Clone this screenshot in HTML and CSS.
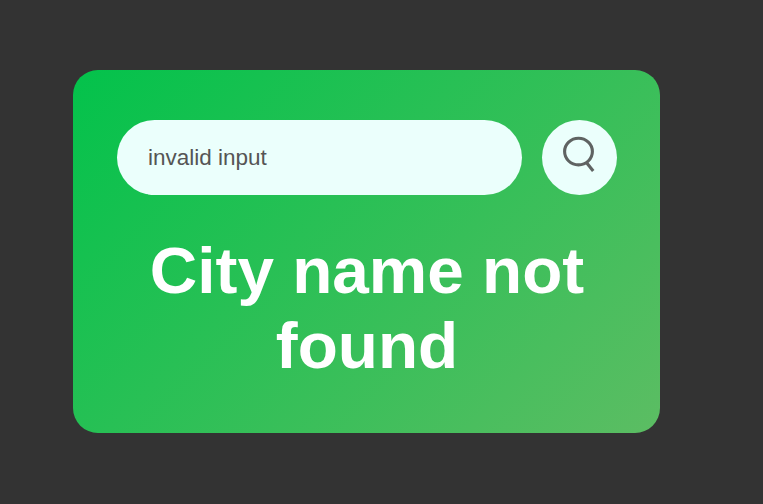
FILE: index.html
```html
<!DOCTYPE html>
<html lang="en">
<head>
<meta charset="utf-8">
<title>Weather</title>
<link rel="stylesheet" href="styles.css">
</head>
<body>
<main class="card">
  <div class="search">
    <input class="search-input" type="text" value="invalid input" spellcheck="false">
    <button class="search-button" aria-label="Search">
      <svg class="search-icon" viewBox="0 0 36 38" fill="none" stroke="#5f6362" stroke-width="3.1"><ellipse cx="16.5" cy="16.6" rx="13.9" ry="13.3"/><path d="M24 27 31.2 36"/></svg>
    </button>
  </div>
  <h1 class="message">City name not found</h1>
</main>
</body>
</html>
```
FILE: styles.css
```css
* {
  box-sizing: border-box;
  margin: 0;
  padding: 0;
}

body {
  background: #333;
  font-family: "Liberation Sans", Arial, sans-serif;
  overflow: hidden;
}

.card {
  width: 587px;
  height: 363px;
  margin: 70px 0 0 73px;
  padding: 50px 43px 0 44px;
  border-radius: 25px;
  background: linear-gradient(135deg, #03c24b, #5cbd63);
  color: #fff;
}

.search {
  display: flex;
  justify-content: space-between;
}

.search-input {
  width: 405px;
  height: 75px;
  padding: 0 31px;
  border: 0;
  outline: 0;
  border-radius: 38px;
  background: #ebfffc;
  color: #555;
  font: 22.5px "Liberation Sans", Arial, sans-serif;
}

.search-button {
  display: flex;
  justify-content: center;
  width: 75px;
  height: 75px;
  padding-top: 15px;
  border: 0;
  border-radius: 50%;
  background: #ebfffc;
}

.search-icon {
  width: 36px;
  height: 38px;
}

.message {
  margin-top: 38px;
  text-align: center;
  font-size: 65.7px;
  font-weight: 700;
  line-height: 75px;
}
```
